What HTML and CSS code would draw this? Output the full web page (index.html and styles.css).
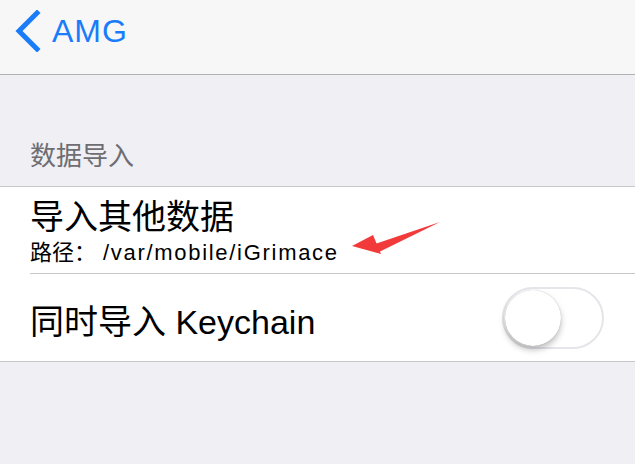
FILE: index.html
```html
<!DOCTYPE html>
<html lang="zh-CN">

<head>
    <meta charset="UTF-8">
    <meta name="viewport" content="width=device-width, initial-scale=1.0">
    <title>AMG</title>
    <link rel="stylesheet" href="styles.css">
</head>

<body>
    <div id="nav">
        <div class="back">
            <svg class="chevron" width="28" height="42" viewBox="0 0 28 42">
                <path d="M24 3 L6 21 L24 39" fill="none" stroke="#1a7cf9" stroke-width="5" stroke-linecap="square" />
            </svg>
            <span class="back-text">AMG</span>
        </div>
    </div>

    <div id="content">
        <div class="section-title">数据导入</div>
        <div class="group">
            <div class="row row-first">
                <div class="row-inner">
                    <p class="title">导入其他数据</p>
                    <p class="sub">路径：<span class="path">/var/mobile/iGrimace</span></p>
                </div>
                <svg class="arrow" width="100" height="40" viewBox="0 0 100 40">
                    <path d="M90 3 L25 25 L29 33 Z" fill="#f23a3a" />
                    <path d="M2 27 L23 16 L31 35 Z" fill="#f23a3a" />
                </svg>
            </div>
            <div class="row">
                <div class="row-inner row-switch">
                    <p class="title">同时导入 Keychain</p>
                    <div class="switch">
                        <div class="knob"></div>
                    </div>
                </div>
            </div>
        </div>
    </div>
</body>

</html>
```

FILE: styles.css
```css
body,
html {
    margin: 0;
    padding: 0;
    overflow: hidden;
}

body {
    background: #efeff4;
    font-family: "Liberation Sans", "Noto Sans CJK SC", sans-serif;
    width: 635px;
    height: 464px;
}

p {
    margin: 0;
}

#nav {
    height: 75px;
    background: #f7f7f8;
    border-bottom: 1px solid #b1b1b4;
    box-sizing: border-box;
    padding: 10px 0 0 13px;
}

.back {
    display: flex;
    align-items: center;
    gap: 11px;
}

.back-text {
    color: #1a7cf9;
    font-size: 32px;
    letter-spacing: 1px;
    line-height: 42px;
}

#content {
    padding-top: 68px;
}

.section-title {
    color: #6d6d72;
    font-size: 26px;
    padding-left: 30px;
    height: 43px;
    line-height: 26px;
}

.group {
    background: #fff;
    border-top: 1px solid #c8c7cc;
    border-bottom: 1px solid #c8c7cc;
}

.row {
    position: relative;
    padding-left: 30px;
}

.row-inner {
    height: 87px;
    box-sizing: border-box;
    border-bottom: 1px solid #c8c7cc;
}

.row:last-child .row-inner {
    border-bottom: none;
}

.row-first .row-inner {
    padding-top: 10px;
}

.row-first .title {
    font-size: 34px;
    line-height: 40px;
    color: #000;
}

.sub {
    font-size: 22px;
    line-height: 28px;
    color: #000;
    margin-top: 2px;
}

.path {
    margin-left: 7px;
    letter-spacing: 1.7px;
}

.arrow {
    position: absolute;
    left: 350px;
    top: 32px;
}

.row-switch {
    display: flex;
    align-items: center;
    justify-content: space-between;
    padding-right: 31px;
}

.row-switch .title {
    font-size: 34px;
    color: #000;
    margin-top: 4px;
}

.switch {
    width: 98px;
    height: 58px;
    border: 2px solid #e5e5ea;
    border-radius: 31px;
    background: #fff;
    position: relative;
}

.knob {
    position: absolute;
    left: 1px;
    top: 1px;
    width: 56px;
    height: 56px;
    border-radius: 50%;
    background: #fff;
    box-shadow: 0 4px 6px rgba(0, 0, 0, 0.25), 0 0 1px rgba(0, 0, 0, 0.3);
}
```
